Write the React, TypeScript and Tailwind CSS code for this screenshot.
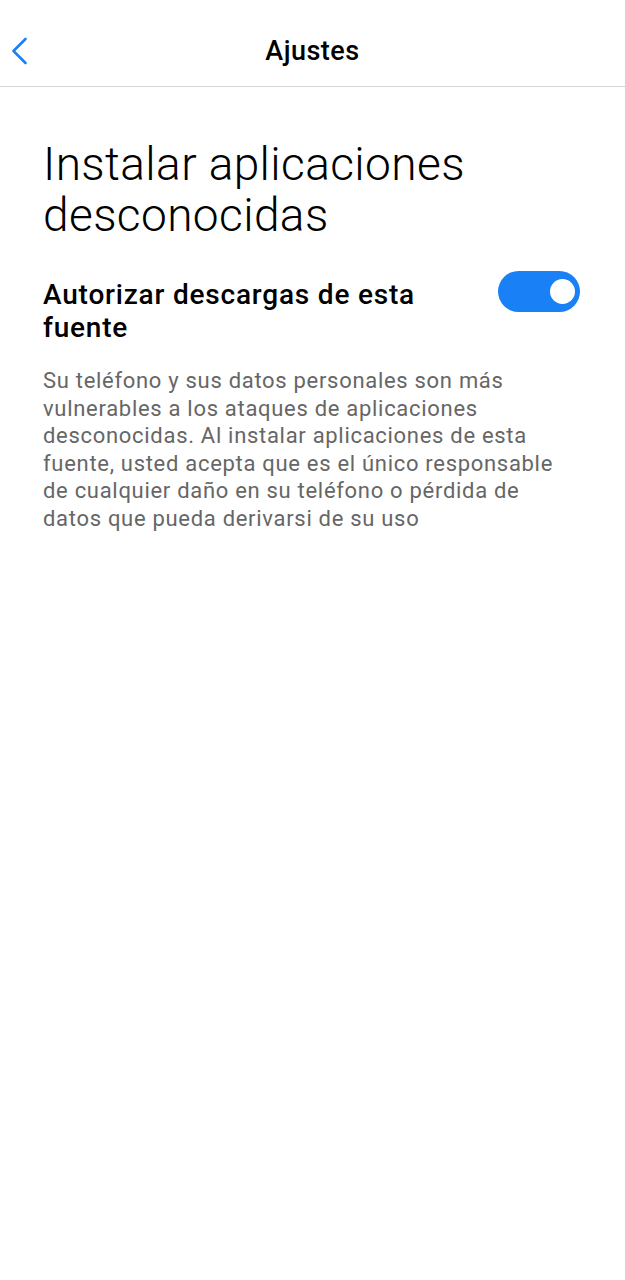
import React, { useState } from "react";

const Toggle = ({ on, onChange }: { on: boolean; onChange: () => void }) => (
  <button
    onClick={onChange}
    className={`relative shrink-0 w-[82px] h-[41px] rounded-full ${on ? "bg-[#1a80f5]" : "bg-gray-300"}`}
  >
    <span
      className={`absolute top-[8px] w-[25px] h-[25px] rounded-full bg-white ${on ? "left-[52px]" : "left-[6px]"}`}
    />
  </button>
);

const App = () => {
  const [allowed, setAllowed] = useState(true);

  return (
    <div className="min-h-screen bg-white font-['Roboto',sans-serif]">
      {/* Header */}
      <div className="relative flex items-center justify-center h-[87px] border-b border-[#d4d4d4]">
        <button className="absolute left-[8px] top-[34px] p-[2px]">
          <svg width="18" height="30" viewBox="0 0 18 30" fill="none">
            <path d="M15.5 3 L3.5 15 L15.5 27" stroke="#1a80f5" strokeWidth="2.6" strokeLinecap="round" strokeLinejoin="round" />
          </svg>
        </button>
        <h1 className="text-[27px] font-medium text-black tracking-[0.5px] pt-[16px]">Ajustes</h1>
      </div>

      <div className="px-[43px] pt-[52px]">
        <h2 className="text-[46px] font-light leading-[51px] text-black tracking-[0.4px]">
          Instalar aplicaciones desconocidas
        </h2>

        <div className="flex items-start justify-between mt-[32px]">
          <p className="mt-[5px] text-[28px] font-medium leading-[33px] text-black tracking-[0.8px] max-w-[420px]">
            Autorizar descargas de esta fuente
          </p>
          <div className="mt-[-2px] mr-[2px]">
            <Toggle on={allowed} onChange={() => setAllowed(!allowed)} />
          </div>
        </div>

        <p className="mt-[23px] text-[22px] leading-[27.5px] text-[#666666] tracking-[0.7px] pr-[9px]">
          Su teléfono y sus datos personales son más vulnerables a los ataques de aplicaciones
          desconocidas. Al instalar aplicaciones de esta fuente, usted acepta que es el único
          responsable de cualquier daño en su teléfono o pérdida de datos que pueda derivarsi de su
          uso
        </p>
      </div>
    </div>
  );
};

export default App;
